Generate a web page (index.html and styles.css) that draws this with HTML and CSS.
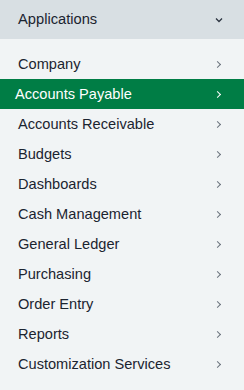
FILE: index.html
```html
<!DOCTYPE html>
<html lang="en">
<head>
    <meta charset="UTF-8">
    <title>Applications</title>
    <link rel="stylesheet" href="styles.css">
</head>
<body>
    <div class="menu">
        <div class="menu-header">
            <span>Applications</span>
            <svg class="chev" width="8" height="6" viewBox="0 0 8 6"><path d="M1 1.5 L4 4.5 L7 1.5" fill="none" stroke="#2b3440" stroke-width="1.3"/></svg>
        </div>
        <ul class="menu-list">
            <li>Company<span class="arrow"></span></li>
            <li class="active">Accounts Payable<span class="arrow"></span></li>
            <li>Accounts Receivable<span class="arrow"></span></li>
            <li>Budgets<span class="arrow"></span></li>
            <li>Dashboards<span class="arrow"></span></li>
            <li>Cash Management<span class="arrow"></span></li>
            <li>General Ledger<span class="arrow"></span></li>
            <li>Purchasing<span class="arrow"></span></li>
            <li>Order Entry<span class="arrow"></span></li>
            <li>Reports<span class="arrow"></span></li>
            <li>Customization Services<span class="arrow"></span></li>
        </ul>
    </div>
</body>
</html>
```

FILE: styles.css
```css
body {
    margin: 0;
    font-family: "Liberation Sans", Arial, sans-serif;
    background-color: #f1f4f5;
    color: #1b2430;
}

.menu {
    width: 244px;
    height: 390px;
    background-color: #f1f4f5;
}

.menu-header {
    height: 39px;
    background-color: #d8dfe3;
    display: flex;
    align-items: center;
    justify-content: space-between;
    padding: 0 21px 0 18px;
    font-size: 14.7px;
}

.menu-header span {
    margin-top: -2px;
}

.menu-list {
    list-style: none;
    margin: 0;
    padding: 10px 0 0 0;
}

.menu-list li {
    height: 30px;
    display: flex;
    align-items: center;
    justify-content: space-between;
    padding: 0 24px 0 18px;
    font-size: 14.6px;
}

.menu-list li.active {
    background-color: #007d45;
    color: #ffffff;
    padding-left: 15px;
}

.arrow {
    width: 4px;
    height: 4px;
    border-top: 1.3px solid #6a737d;
    border-right: 1.3px solid #6a737d;
    transform: rotate(45deg);
}

.active .arrow {
    border-color: #ffffff;
}
```
